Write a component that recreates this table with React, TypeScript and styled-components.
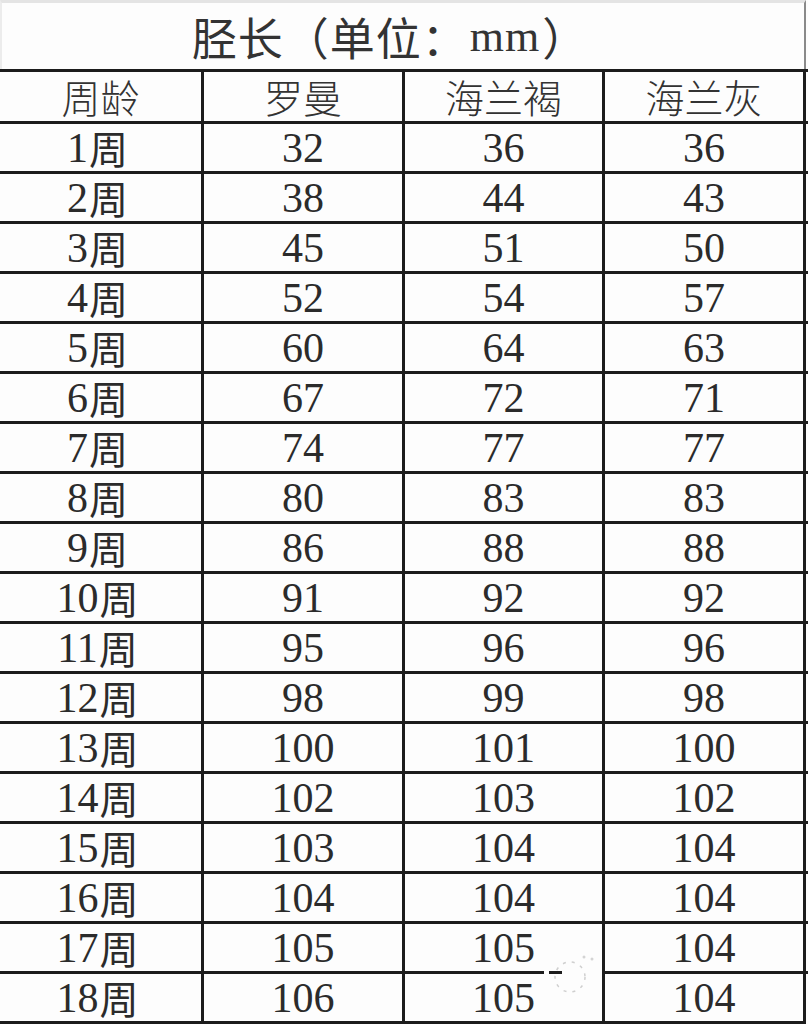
import React from "react";
import styled, { createGlobalStyle } from "styled-components";

const GlobalStyle = createGlobalStyle`
  html, body {
    margin: 0;
    padding: 0;
    background: #ffffff;
  }
`;

const Page = styled.div`
  position: relative;
  width: 808px;
  height: 1024px;
  background: #fdfdfd;
  overflow: hidden;
  color: #2b2b2b;
`;

const Title = styled.div`
  box-sizing: border-box;
  height: 69px;
  width: 806px;
  border-top: 3px solid #e4e4e4;
  border-left: 2px solid #ececec;
  border-right: 2px solid #8a8a8a;
  display: flex;
  align-items: center;
  justify-content: center;
  padding: 2px 26px 0 0;
  font-family: "Noto Sans CJK SC", "Liberation Serif", serif;
  font-size: 45px;
  line-height: 1.2;
  color: #333333;
  letter-spacing: 1px;
`;

const Unit = styled.span`
  font-family: "Liberation Serif", serif;
  font-size: 44px;
  margin: 0 2px;
`;

const Row = styled.div<{ $header?: boolean }>`
  box-sizing: border-box;
  display: grid;
  grid-template-columns: 204px 201px 200px 201px;
  height: ${({ $header }) => ($header ? "52px" : "50px")};
  border-top: 3px solid #1c1c1c;
`;

const Cell = styled.div<{ $cjk?: boolean }>`
  box-sizing: border-box;
  border-right: 3px solid #1c1c1c;
  display: flex;
  align-items: center;
  justify-content: center;
  padding-right: ${({ $cjk }) => ($cjk ? "6px" : "0")};
  font-family: "Liberation Serif", "Noto Sans CJK SC", serif;
  font-size: 42px;
  line-height: 1;
  white-space: nowrap;
`;

const Week = styled.span`
  display: inline-block;
  font-family: "Noto Sans CJK SC", sans-serif;
  font-size: 39px;
  line-height: 1;
  height: 39px;
  margin-left: 1px;
`;

const HeadText = styled.span`
  display: inline-block;
  font-family: "Noto Sans CJK SC", sans-serif;
  font-size: 39px;
  line-height: 1;
  height: 39px;
  color: #333333;
  font-weight: 300;
`;

const BottomLine = styled.div`
  width: 806px;
  height: 3px;
  background: #1c1c1c;
`;

const Watermark = styled.svg`
  position: absolute;
  left: 520px;
  top: 955px;
  width: 90px;
  height: 70px;
  pointer-events: none;
`;

const headers = ["周龄", "罗曼", "海兰褐", "海兰灰"];

const data: [number, number, number, number][] = [
  [1, 32, 36, 36],
  [2, 38, 44, 43],
  [3, 45, 51, 50],
  [4, 52, 54, 57],
  [5, 60, 64, 63],
  [6, 67, 72, 71],
  [7, 74, 77, 77],
  [8, 80, 83, 83],
  [9, 86, 88, 88],
  [10, 91, 92, 92],
  [11, 95, 96, 96],
  [12, 98, 99, 98],
  [13, 100, 101, 100],
  [14, 102, 103, 102],
  [15, 103, 104, 104],
  [16, 104, 104, 104],
  [17, 105, 105, 104],
  [18, 106, 105, 104],
];

const App = () => (
  <Page>
    <GlobalStyle />
    <Title>
      胫长（单位：<Unit>mm</Unit>）
    </Title>
    <Row $header>
      {headers.map(h => (
        <Cell key={h}>
          <HeadText>{h}</HeadText>
        </Cell>
      ))}
    </Row>
    {data.map(([week, ...vals]) => (
      <Row key={week}>
        <Cell $cjk>
          {week}
          <Week>周</Week>
        </Cell>
        {vals.map((v, i) => (
          <Cell key={i}>{v}</Cell>
        ))}
      </Row>
    ))}
    <BottomLine />
    {/* faint watermark that breaks the line under 17周 */}
    <Watermark viewBox="0 0 90 70">
      <rect x="24" y="14" width="5" height="5" fill="#fdfdfd" />
      <rect x="42" y="14" width="40" height="5" fill="#fdfdfd" />
      <circle
        cx="50"
        cy="22"
        r="15"
        fill="none"
        stroke="#cfcfcf"
        strokeWidth="1.5"
        strokeDasharray="3 6"
      />
      <circle cx="64" cy="2" r="1.5" fill="#d4d4d4" />
      <circle cx="72" cy="4" r="1.5" fill="#d4d4d4" />
    </Watermark>
  </Page>
);

export default App;
